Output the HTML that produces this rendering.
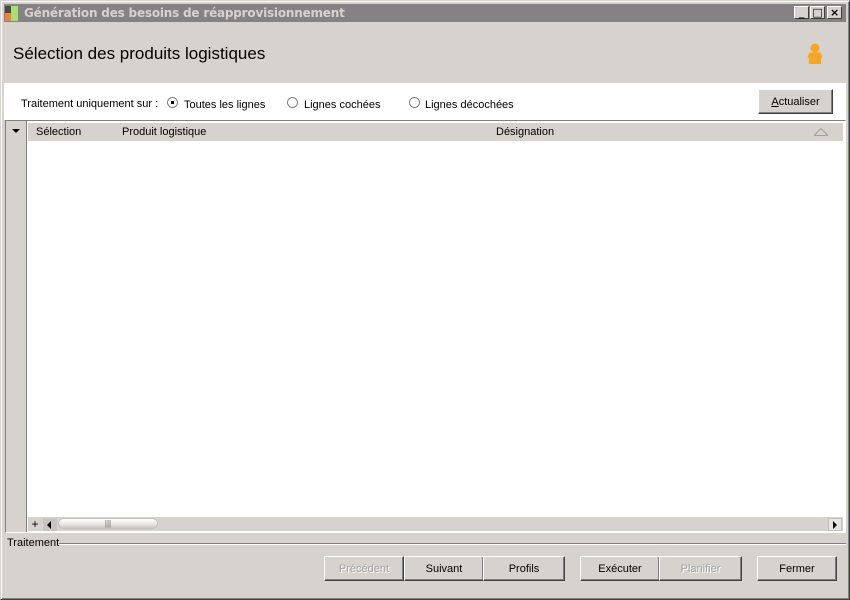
<!DOCTYPE html>
<html><head><meta charset="utf-8"><style>
*{margin:0;padding:0;box-sizing:border-box}
body{width:850px;height:600px;background:#d6d3ce;font-family:"Liberation Sans","DejaVu Sans",sans-serif;font-size:11px;color:#000;position:relative;overflow:hidden}
.abs{position:absolute}
#win{left:0;top:0;width:850px;height:600px;border:1px solid;border-color:#d6d3ce #404040 #404040 #d6d3ce;box-shadow:inset 1px 1px 0 #fff,inset -1px -1px 0 #808080}
#title{left:4px;top:4px;width:842px;height:18px;background:#848284;color:#d6d3ce;font-weight:bold;font-size:12px;line-height:18px;padding-left:20px;font-family:"DejaVu Sans",sans-serif;letter-spacing:-0.2px}
.tb{top:2px;width:15px;height:13px;background:#d6d3ce;border:1px solid;border-color:#fff #404040 #404040 #fff;font-size:11px;line-height:11px;text-align:center;color:#000}
#hdr{left:4px;top:22px;width:842px;height:61px;background:#d6d3ce}
#strip{left:4px;top:83px;width:842px;height:37px;background:#fff}
.btn{position:absolute;height:25px;background:#d6d3ce;border:1px solid;border-color:#fff #404040 #404040 #fff;box-shadow:inset -1px -1px 0 #808080;text-align:center;line-height:24px;font-size:11px}
.dis{color:#a0a0a0;text-shadow:1px 1px 0 #fff}
.radio{position:absolute;width:11px;height:11px;border-radius:50%;border:1px solid #808080;background:#fff;top:97px}
</style></head><body>
<div id="win" class="abs"></div>
<div id="title" class="abs">Génération des besoins de réapprovisionnement
 <div class="abs" style="left:1px;top:2px;width:6px;height:15px;background:#4a4a4a"></div>
 <div class="abs" style="left:1px;top:9px;width:6px;height:8px;background:#f08040"></div>
 <div class="abs" style="left:7px;top:2px;width:7px;height:15px;background:#a8e070"></div>
 <div class="tb abs" style="left:790px">_</div>
 <div class="tb abs" style="left:806px">□</div>
 <div class="tb abs" style="left:823px;font-weight:bold">×</div>
</div>
<div id="hdr" class="abs">
 <div class="abs" style="left:9px;top:22px;font-size:17px;color:#000">Sélection des produits logistiques</div>
 <svg class="abs" style="left:803px;top:21px" width="16" height="22" viewBox="0 0 16 22"><circle cx="8" cy="5" r="4.5" fill="#f5a623"/><path d="M2.5 9.5h11l2 5-1.5 1v5.5H2v-5.5L0.5 14.5z" fill="#f5a623"/></svg>
</div>
<div id="strip" class="abs"></div>
<div class="abs" style="left:21px;top:98px">Traitement uniquement sur :</div>
<div class="radio" style="left:167px"><div class="abs" style="left:3px;top:3px;width:3px;height:3px;background:#000"></div></div>
<div class="abs" style="left:184px;top:99px">Toutes les lignes</div>
<div class="radio" style="left:287px"></div>
<div class="abs" style="left:304px;top:99px">Lignes cochées</div>
<div class="radio" style="left:409px"></div>
<div class="abs" style="left:425px;top:99px">Lignes décochées</div>
<div class="btn" style="left:758px;top:89px;width:75px;height:25px"><u>A</u>ctualiser</div>
<!-- grid -->
<div class="abs" style="left:5px;top:120px;width:841px;height:413px;border:1px solid;border-color:#808080 #fff #fff #808080;background:#fff">
 <div class="abs" style="left:0;top:0;width:21px;height:411px;background:#d6d3ce;border-right:1px solid #808080"></div>
 <div class="abs" style="left:6px;top:8px;width:0;height:0;border-left:4px solid transparent;border-right:4px solid transparent;border-top:4px solid #000"></div>
 <div class="abs" style="left:22px;top:2px;width:815px;height:18px;background:#d6d3ce"></div>
 <div class="abs" style="left:30px;top:5px">Sélection</div>
 <div class="abs" style="left:116px;top:5px">Produit logistique</div>
 <div class="abs" style="left:490px;top:5px">Désignation</div>
 <svg class="abs" style="left:808px;top:7px" width="14" height="8"><path d="M0 7.5h14L7 0.5z" fill="none" stroke="#a0a0a0"/></svg>
 <div class="abs" style="left:22px;top:396px;width:815px;height:14px;background:#d6d3ce"></div>
 <div class="abs" style="left:23px;top:397px;width:12px;height:13px;font-size:12px;line-height:12px;text-align:center">+</div>
 <div class="abs" style="left:37px;top:397px;width:14px;height:13px;background:#c8c5c0"><div class="abs" style="left:4px;top:3px;border-right:4px solid #000;border-top:4px solid transparent;border-bottom:4px solid transparent"></div></div>
 <div class="abs" style="left:52px;top:397px;width:100px;height:11px;background:linear-gradient(#fff,#e8e6e2 60%,#c8c5c0);border-radius:6px;border:1px solid #c0c0c0;text-align:center;font-size:8px;line-height:9px;color:#606060">|||</div>
 <div class="abs" style="left:822px;top:397px;width:14px;height:13px;background:#e8e6e2;border:1px solid #c0c0c0"><div class="abs" style="left:4px;top:2px;border-left:4px solid #000;border-top:4px solid transparent;border-bottom:4px solid transparent"></div></div>
</div>
<div class="abs" style="left:7px;top:537px">Traitement</div>
<div class="abs" style="left:59px;top:543px;width:787px;height:2px;border-top:1px solid #808080;border-bottom:1px solid #fff"></div>
<div class="btn dis" style="left:324px;top:556px;width:80px">Précédent</div>
<div class="btn" style="left:404px;top:556px;width:80px">Suivant</div>
<div class="btn" style="left:483px;top:556px;width:82px">Profils</div>
<div class="btn" style="left:580px;top:556px;width:80px">Exécuter</div>
<div class="btn dis" style="left:659px;top:556px;width:83px">Planifier</div>
<div class="btn" style="left:757px;top:556px;width:80px">Fermer</div>
</body></html>
